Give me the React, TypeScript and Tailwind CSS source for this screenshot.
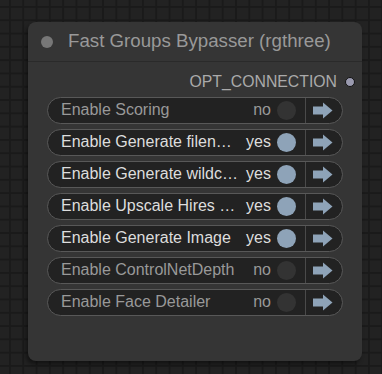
import React from 'react';

type Row = { label: string; on: boolean };

const rows: Row[] = [
  { label: 'Enable Scoring', on: false },
  { label: 'Enable Generate filen…', on: true },
  { label: 'Enable Generate wildc…', on: true },
  { label: 'Enable Upscale Hires …', on: true },
  { label: 'Enable Generate Image', on: true },
  { label: 'Enable ControlNetDepth', on: false },
  { label: 'Enable Face Detailer', on: false },
];

const Arrow = () => (
  <svg width="21" height="17" viewBox="0 0 21 17">
    <path d="M1 4.5 H11 V0.5 L20.5 8.5 L11 16.5 V12.5 H1 Z" fill="#8ea3b8" />
  </svg>
);

const ToggleRow: React.FC<Row> = ({ label, on }) => (
  <div className="flex h-[27px] items-stretch rounded-full border border-[#585858] bg-[#222]">
    <div className="flex min-w-0 flex-1 items-center pl-[13px] pr-[9px]">
      <span className={`flex-1 whitespace-nowrap text-[16px] leading-none ${on ? 'text-[#ddd]' : 'text-[#999]'}`}>{label}</span>
      <span className={`mr-[6px] text-[16px] leading-none ${on ? 'text-[#ddd]' : 'text-[#999]'}`}>{on ? 'yes' : 'no'}</span>
      <span className={`h-[19px] w-[19px] rounded-full ${on ? 'bg-[#8ea3b8]' : 'bg-[#333]'}`} />
    </div>
    <div className="flex w-[37px] items-center justify-center border-l border-[#4a4a4a] pr-[3px]">
      <Arrow />
    </div>
  </div>
);

export default function App() {
  return (
    <div
      className="h-[374px] w-[382px] overflow-hidden bg-[#222] bg-[linear-gradient(to_right,#1a1a1a_2px,transparent_2px),linear-gradient(to_bottom,#1a1a1a_2px,transparent_2px)] bg-[size:13.3px_13.3px] bg-[position:9px_6px] pl-[28px] pt-[22px]"
      style={{ fontFamily: '"Liberation Sans", Arial, sans-serif' }}
    >
      <div className="flex h-[339px] w-[334px] flex-col rounded-[8px] bg-[#353535] shadow-[-2px_3px_4px_rgba(0,0,0,0.45)]">
        <div className="flex h-[40px] items-center border-b border-[#2a2a2a] pl-[13px]">
          <span className="h-[12px] w-[12px] rounded-full bg-[#777]" />
          <span className="ml-[15px] whitespace-nowrap text-[18.7px] text-[#999]">Fast Groups Bypasser (rgthree)</span>
        </div>
        <div className="mt-[12px] flex items-center justify-end pr-[7px]">
          <span className="text-[15.8px] leading-none text-[#aaa]">OPT_CONNECTION</span>
          <span className="ml-[8px] h-[10px] w-[10px] rounded-full border border-[#111] bg-[#9a9aaf]" />
        </div>
        <div className="mt-[7px] flex flex-col gap-[5px] pl-[19px] pr-[19px]">
          {rows.map((r) => (
            <ToggleRow key={r.label} {...r} />
          ))}
        </div>
      </div>
    </div>
  );
}
